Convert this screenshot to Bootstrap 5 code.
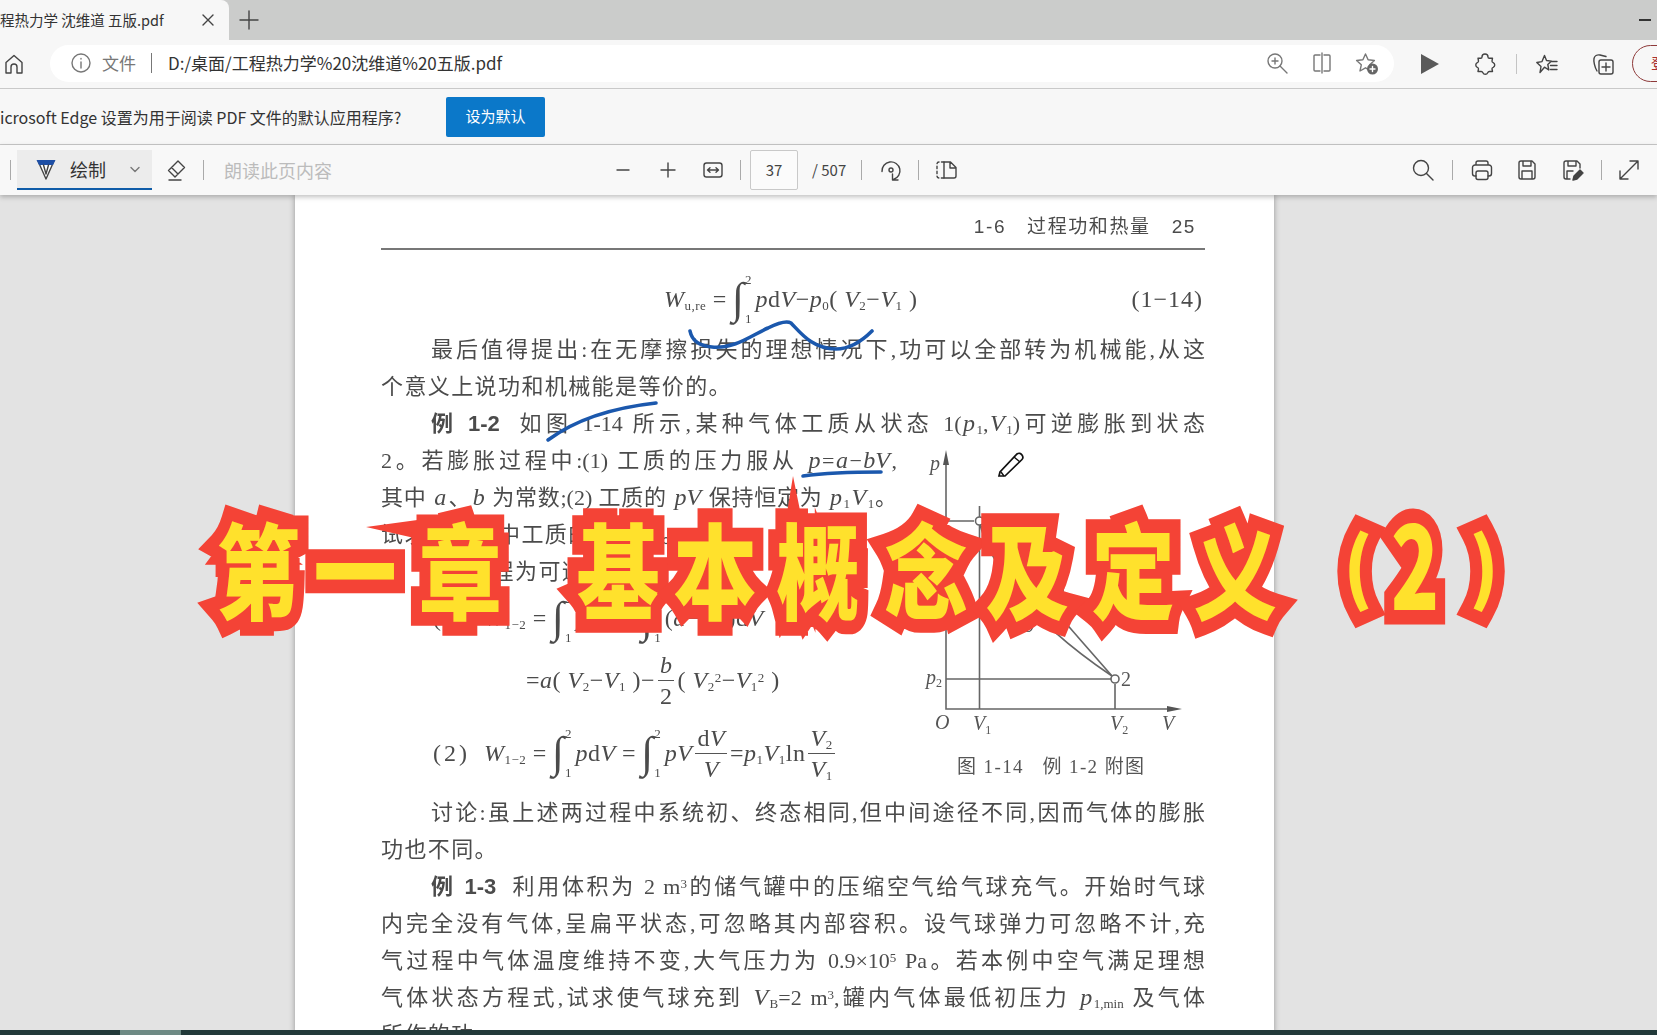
<!DOCTYPE html>
<html lang="zh-CN">

<head>
  <meta charset="utf-8">
  <title>工程热力学 沈维道 五版.pdf</title>
  <link href="https://cdn.jsdelivr.net/npm/bootstrap@5.3.2/dist/css/bootstrap.min.css" rel="stylesheet" type="text/css" />
  <script src="https://cdn.jsdelivr.net/npm/bootstrap@5.3.2/dist/js/bootstrap.bundle.min.js"></script>
  <style>
    html, body { height: 1035px; overflow: hidden; }
    body { background: #e3e3e3; font-family: "Noto Sans CJK SC", "Liberation Sans", sans-serif; color: #333; }

    /* browser chrome */
    .tab-strip { height: 40px; background: #cbcccb; }
    .tab-active { width: 229px; height: 40px; background: #f7f7f7; border-radius: 0 8px 0 0; font-size: 14.5px; }
    .tab-title { width: 196px; white-space: nowrap; }
    .tab-x { width: 24px; }
    .tab-plus { margin-left: 8px; }
    .min-btn { width: 12px; height: 1.5px; background: #333; margin-right: 6px; }

    .addr-bar { height: 49px; background: #f7f7f7; border-bottom: 1px solid #c9c9c9; overflow: hidden; }
    .home-slot { width: 50px; padding-left: 2px; flex: none; }
    .addr-pill { width: 1344px; height: 37px; background: #fff; border-radius: 19px; margin-top: -2px; font-size: 17px; flex: none; }
    .addr-info { margin-left: 19px; }
    .addr-file { color: #777; margin-left: 9px; width: 49px; }
    .addr-sep { width: 1px; height: 20px; background: #777; margin-right: 16px; }
    .addr-url { color: #333; white-space: nowrap; }
    .addr-tools { margin-left: auto; padding-right: 15px; gap: 21px; }
    .outer-tools { margin-left: 24px; flex: none; }
    .t-play { margin-right: 31px; }
    .t-ext { margin-right: 19px; }
    .t-fav { margin-left: 18px; margin-right: 32px; }
    .profile-pill { width: 60px; height: 37px; margin-left: 17px; border: 1.5px solid #8e3a3a; border-radius: 19px; color: #a33; font-size: 15px; padding-left: 18px; margin-top: -2px; flex: none; }
    .thin-sep { width: 1px; height: 20px; background: #c4c4c4; flex: none; }

    .info-bar { height: 56px; background: #f7f7f7; border-bottom: 1px solid #c9c9c9; font-size: 16px; white-space: nowrap; }
    .info-text { width: 446px; overflow: hidden; }
    .btn-default-pdf { width: 99px; height: 40px; background: #0b78c9; color: #fff; border: 0; border-radius: 2px; font-size: 15px; padding: 0; }

    .pdf-toolbar { height: 50px; background: #f8f8f8; box-shadow: 0 2px 5px rgba(0, 0, 0, .25); position: relative; z-index: 2; font-size: 16px; }
    .tb-sep { width: 1px; height: 20px; background: #aaa; flex: none; }
    .tb-first { margin-left: 10px; margin-right: 6px; }
    .draw-btn { width: 135px; height: 40px; background: #ececec; border-bottom: 2px solid #0f5ca8; flex: none; }
    .draw-pen { margin-left: 17px; }
    .draw-label { margin-left: 12px; font-size: 18px; }
    .draw-chev { margin-left: auto; margin-right: 5px; }
    .tb-eraser { margin-left: 11px; margin-right: 16px; }
    .read-text { margin-left: 20px; width: 383px; color: #bcbcbc; font-size: 18px; flex: none; }
    .tb-slot { width: 32px; height: 32px; flex: none; display: flex; align-items: center; justify-content: center; }
    .gap-13 { gap: 13px; }
    .tb-zoom-sep { margin-left: 11px; margin-right: 9px; }
    .page-input { width: 48px; height: 40px; background: #fbfbfb; border: 1px solid #c9c9c9; border-radius: 2px; font-size: 15px; color: #444; flex: none; }
    .page-total { margin-left: 14px; width: 49px; font-size: 15px; color: #444; flex: none; }
    .tb-rot { margin-left: 13px; margin-right: 11px; }
    .tb-two { margin-left: 11px; }
    .tb-right { margin-left: auto; margin-right: 12px; gap: 13px; }
    .tb-expand { margin-left: -2px; }

    /* pdf viewer */
    .viewer { position: relative; height: 840px; overflow: hidden; background: #e3e3e3; }
    .pdf-page { width: 979px; height: 840px; margin-left: 295px; background: #fff; box-shadow: 0 0 6px rgba(0, 0, 0, .35); padding: 16px 69px 0 86px; color: #4b4b4b; font-family: "Liberation Serif", "Noto Sans CJK SC", serif; font-size: 22px; filter: blur(.35px); }
    .run-head { height: 32px; font-family: "Liberation Sans", "Noto Sans CJK SC", sans-serif; font-size: 19px; letter-spacing: 1.6px; padding-right: 9px; }
    .run-head b { font-weight: 400; margin-left: 21px; }
    .head-rule { height: 2px; background: #777; margin-top: 5px; }
    .eq-main { height: 81px; padding-top: 17px; }
    .eq-num { margin-left: auto; letter-spacing: 1px; padding-right: 2px; }
    .eq-start { margin-left: 283px; }
    .tline { height: 37px; line-height: 37px; text-align: justify; text-align-last: justify; white-space: normal; }
    .tline.indent { padding-left: 50px; }
    .tline.short { text-align-last: left; letter-spacing: 1.4px; }
    .tline b { font-family: "Liberation Sans", "Noto Sans CJK SC", sans-serif; }
    .tline i { font-size: 24px; margin: 0 1.5px; }
    .eg-row { height: 352px; }
    .eg-left { width: 516px; flex: none; }
    .eg-fig { margin-left: 9px; flex: none; filter: blur(.2px); }
    i { font-family: "Liberation Serif", serif; }
    .eq-row { display: flex; align-items: center; white-space: nowrap; font-size: 24px; letter-spacing: .5px; }
    .eq-a { height: 56px; margin-left: 52px; }
    .eq-b { height: 68px; margin-left: 145px; }
    .eq-c { height: 78px; margin-left: 52px; }
    .int-sign { display: inline-flex; align-items: center; margin: 0 4px 0 5px; letter-spacing: 0; }
    .int-body { font-size: 44px; line-height: 1; font-weight: 400; }
    .int-lim { display: inline-flex; flex-direction: column; justify-content: space-between; height: 52px; font-size: 13px; line-height: 1; margin-left: 1px; }
    .frac-box { display: inline-flex; flex-direction: column; align-items: center; margin: 0 3px; line-height: 1.25; }
    .frac-top { border-bottom: 1.5px solid #555; padding: 0 2px; }
    sub, sup { font-size: 13px; }
    .sp-r { margin-right: 14px; letter-spacing: 3px; }

    .overlay-ink { position: absolute; left: 0; top: 0; pointer-events: none; }
    .ink-line { fill: none; stroke: #1b58ad; stroke-width: 3.6; stroke-linecap: round; }
    .fig-cap { font-size: 19px; letter-spacing: 1.4px; }

    .big-title { position: absolute; left: 0; top: 0; pointer-events: none; }
    .big-title text { font-family: "Noto Sans CJK SC", sans-serif; font-weight: 900; fill: #ffe12c; stroke: #f44336; stroke-width: 25px; stroke-linejoin: miter; stroke-miterlimit: 5; paint-order: stroke fill; font-size: 104px; text-anchor: middle; vector-effect: non-scaling-stroke; }
    .title-spike { fill: #f44336; }

    .bottom-bar { height: 5px; margin-top: -5px; position: relative; z-index: 3; background: #223a3a; }
    .bar-piece { width: 61px; height: 5px; margin-left: 120px; background: #6e8a84; }

    .ico { width: 24px; height: 24px; fill: none; stroke: #444; stroke-width: 1.4; stroke-linecap: round; stroke-linejoin: round; flex: none; }
    .ico.soft { stroke: #777; }
  </style>
</head>

<body>
  <div class="tab-strip d-flex align-items-center">
    <div class="tab-active d-flex align-items-center">
      <span class="tab-title">程热力学 沈维道 五版.pdf</span>
      <span class="tab-x d-flex justify-content-center">
        <svg class="ico" viewBox="0 0 24 24"><path d="M7 7l10 10M17 7L7 17" /></svg>
      </span>
    </div>
    <span class="tab-plus d-flex">
      <svg class="ico" viewBox="0 0 24 24"><path d="M12 3v18M3 12h18" /></svg>
    </span>
    <span class="min-btn ms-auto"></span>
  </div>

  <div class="addr-bar d-flex align-items-center">
    <div class="home-slot d-flex">
      <svg class="ico" viewBox="0 0 24 24"><path d="M4 21V10.500L12 3.500l8 7V21h-5v-6a3 3 0 0 0-6 0v6z" /></svg>
    </div>
    <div class="addr-pill d-flex align-items-center">
      <svg class="ico soft addr-info" viewBox="0 0 24 24"><circle cx="12" cy="12" r="9" /><path d="M12 11v6M12 7.500v.6" /></svg>
      <span class="addr-file">文件</span>
      <span class="addr-sep"></span>
      <span class="addr-url">D:/桌面/工程热力学%20沈维道%20五版.pdf</span>
      <div class="addr-tools d-flex align-items-center">
        <svg class="ico soft" viewBox="0 0 24 24"><circle cx="10" cy="10" r="7" /><path d="M10 7v6M7 10h6M15 15l7 7" /></svg>
        <svg class="ico soft" viewBox="0 0 24 24"><path d="M10 4H5a1 1 0 0 0-1 1v14a1 1 0 0 0 1 1h5M14 4h5a1 1 0 0 1 1 1v14a1 1 0 0 1-1 1h-5M12 2v20" /></svg>
        <svg class="ico soft" viewBox="0 0 24 24"><path d="M10.500 3l2.600 5.800 6.300.7-4.700 4.300 1.300 6.200-5.500-3.200L5 20l1.300-6.200-4.700-4.300 6.300-.7z" /><circle cx="17.500" cy="18" r="5.500" fill="#666" stroke="none" /><path d="M17.500 15.500v5M15 18h5" stroke="#fff" /></svg>
      </div>
    </div>
    <div class="outer-tools d-flex align-items-center">
      <svg class="ico t-play" viewBox="0 0 24 24"><path d="M3 2l18 10L3 22z" fill="#5a5a5a" stroke="none" /></svg>
      <svg class="ico t-ext" viewBox="0 0 24 24"><path d="M9 5a3 3 0 0 1 6 0c0 .8.500 1.200 1.300 1.200H19.500l-.5 3c-.1.800.4 1.200 1.200 1.500a2.500 2.500 0 0 1 0 4.600c-.8.300-1.300.700-1.200 1.500l.5 2.700h-3.200c-.8 0-1.300.5-1.600 1.200a2.600 2.600 0 0 1-4.800 0c-.3-.7-.8-1.200-1.600-1.200H5l.5-2.700c.1-.8-.4-1.200-1.200-1.500a2.500 2.500 0 0 1 0-4.600c.8-.3 1.300-.7 1.200-1.500L5 6.200h2.700C8.500 6.200 9 5.800 9 5z" /></svg>
      <span class="thin-sep"></span>
      <svg class="ico t-fav" viewBox="0 0 24 24"><path d="M9.500 3.500l2 5 5 .6-3.700 3.400 1 5.500-4.300-2.800L5 20.500l1-6-4.200-4 5.200-.9zM16 9.500h6M15.500 13.500h6.500M15.500 17.500h6.500" /></svg>
      <svg class="ico" viewBox="0 0 24 24"><path d="M6 19C3.500 15 2.500 9 3 6.500S6 2.500 9 3l6 1.500" /><rect x="8" y="8" width="14" height="14" rx="2" /><path d="M15 11v8M11 15h8" /></svg>
      <div class="profile-pill d-flex align-items-center">登</div>
    </div>
  </div>

  <div class="info-bar d-flex align-items-center">
    <div class="info-text">icrosoft Edge 设置为用于阅读 PDF 文件的默认应用程序?</div>
    <button type="button" class="btn btn-default-pdf">设为默认</button>
  </div>

  <div class="pdf-toolbar d-flex align-items-center">
    <span class="tb-sep tb-first"></span>
    <div class="draw-btn d-flex align-items-center">
      <svg class="ico draw-pen" viewBox="0 0 24 24"><path d="M4 4h16l-8 18z" fill="#fff" stroke="#444" /><path d="M2.500 3h19l-2.500 5H5z" fill="#1e4fa6" stroke="none" /><path d="M9.500 8l2.500 9 2.500-9" stroke="#444" /></svg>
      <span class="draw-label">绘制</span>
      <svg class="ico soft draw-chev" viewBox="0 0 24 24"><path d="M8 10.500l4 4 4-4" /></svg>
    </div>
    <svg class="ico tb-eraser" viewBox="0 0 24 24"><path d="M15 3l6.500 6.500-9.500 9.500-6.500-6.500zM8.500 9.500l6.500 6.500M6 22h12" /></svg>
    <span class="tb-sep"></span>
    <span class="read-text">朗读此页内容</span>

    <div class="d-flex align-items-center gap-13">
      <span class="tb-slot"><svg class="ico" viewBox="0 0 24 24"><path d="M6 12h12" /></svg></span>
      <span class="tb-slot"><svg class="ico" viewBox="0 0 24 24"><path d="M12 5v14M5 12h14" /></svg></span>
      <span class="tb-slot"><svg class="ico" viewBox="0 0 24 24"><rect x="3" y="5" width="18" height="14" rx="2.500" /><path d="M6.500 12h11M9 9.800L6.500 12 9 14.200M15 9.800l2.500 2.200-2.500 2.200" /></svg></span>
    </div>
    <span class="tb-sep tb-zoom-sep"></span>
    <div class="page-input d-flex align-items-center justify-content-center">37</div>
    <span class="page-total">/ 507</span>
    <span class="tb-sep"></span>
    <span class="tb-slot tb-rot"><svg class="ico" viewBox="0 0 24 24"><path d="M3 13.500a9 9 0 1 1 11.500 8M13.500 16v6H19" /><circle cx="12" cy="12" r="2" /></svg></span>
    <span class="tb-sep"></span>
    <span class="tb-slot tb-two"><svg class="ico" viewBox="0 0 24 24"><path d="M10 4H5a2 2 0 0 0-2 2v12a2 2 0 0 0 2 2h5" stroke-dasharray="2.500 2.500" /><path d="M10 4h6.500L22 9.500V18a2 2 0 0 1-2 2H10zM16 4v6h6" /></svg></span>

    <div class="tb-right d-flex align-items-center">
      <span class="tb-slot"><svg class="ico" viewBox="0 0 24 24"><circle cx="10" cy="10" r="7.500" /><path d="M15.500 15.500l6.500 6.500" /></svg></span>
      <span class="tb-sep"></span>
      <span class="tb-slot"><svg class="ico" viewBox="0 0 24 24"><path d="M6 7V5a2 2 0 0 1 2-2h8a2 2 0 0 1 2 2v2M6 18H5a2.500 2.500 0 0 1-2.500-2.500v-6A2.500 2.500 0 0 1 5 7h14a2.500 2.500 0 0 1 2.500 2.500v6A2.500 2.500 0 0 1 19 18h-1" /><rect x="6" y="13" width="12" height="8.500" rx="2" /></svg></span>
      <span class="tb-slot"><svg class="ico" viewBox="0 0 24 24"><path d="M6 3h11l3 3v13a2 2 0 0 1-2 2H6a2 2 0 0 1-2-2V5a2 2 0 0 1 2-2zM8 3v5h8V3M7 21v-8h10v8" /></svg></span>
      <span class="tb-slot"><svg class="ico" viewBox="0 0 24 24"><path d="M10 21H6a2 2 0 0 1-2-2V5a2 2 0 0 1 2-2h11l3 3v4M8 3v5h8V3M7 21v-8h6" /><path d="M13 22l1-4 6-6 3 3-6 6z" fill="#444" /></svg></span>
      <span class="tb-sep"></span>
      <span class="tb-slot tb-expand"><svg class="ico" viewBox="0 0 24 24"><path d="M21 3L3 21M13 3h8v8M3 13v8h8" /></svg></span>
    </div>
  </div>

  <div class="viewer">
    <div class="pdf-page">
      <div class="run-head d-flex justify-content-end align-items-center">
        <span>1-6</span><b>过程功和热量</b><b>25</b>
      </div>
      <div class="head-rule"></div>

      <div class="eq-main eq-row">
        <span class="eq-start"><i>W</i><sub>u,re</sub> =</span>
        <span class="int-sign"><span class="int-body">∫</span><span class="int-lim"><span>2</span><span>1</span></span></span>
        <span><i>p</i>d<i>V</i>−<i>p</i><sub>0</sub>( <i>V</i><sub>2</sub>−<i>V</i><sub>1</sub> )</span>
        <span class="eq-num">(1−14)</span>
      </div>

      <div class="tline indent">最后值得提出:在无摩擦损失的理想情况下,功可以全部转为机械能,从这</div>
      <div class="tline short">个意义上说功和机械能是等价的。</div>
      <div class="tline indent"><b>例 1-2</b>&nbsp;&nbsp;如图 1-14 所示,某种气体工质从状态 1(<i>p</i><sub>1</sub>,<i>V</i><sub>1</sub>)可逆膨胀到状态</div>

      <div class="eg-row d-flex">
        <div class="eg-left">
          <div class="tline">2。若膨胀过程中:(1) 工质的压力服从 <i>p</i>=<i>a</i>−<i>bV</i>,</div>
          <div class="tline">其中 <i>a</i>、<i>b</i> 为常数;(2) 工质的 <i>pV</i> 保持恒定为 <i>p</i><sub>1</sub><i>V</i><sub>1</sub>。</div>
          <div class="tline short">试求两过程中工质的膨胀功。</div>
          <div class="tline short indent"><b>解</b>&nbsp;&nbsp;过程为可逆过程</div>
          <div class="eq-row eq-a">
            <span class="sp-r">(1)</span><span><i>W</i><sub>1−2</sub> =</span>
            <span class="int-sign"><span class="int-body">∫</span><span class="int-lim"><span>2</span><span>1</span></span></span>
            <span><i>p</i>d<i>V</i> =</span>
            <span class="int-sign"><span class="int-body">∫</span><span class="int-lim"><span>2</span><span>1</span></span></span>
            <span>(<i>a</i>−<i>bV</i>)d<i>V</i></span>
          </div>
          <div class="eq-row eq-b">
            <span>=<i>a</i>( <i>V</i><sub>2</sub>−<i>V</i><sub>1</sub> )−</span>
            <span class="frac-box"><span class="frac-top"><i>b</i></span><span>2</span></span>
            <span>( <i>V</i><sub>2</sub><sup>2</sup>−<i>V</i><sub>1</sub><sup>2</sup> )</span>
          </div>
          <div class="eq-row eq-c">
            <span class="sp-r">(2)</span><span><i>W</i><sub>1−2</sub> =</span>
            <span class="int-sign"><span class="int-body">∫</span><span class="int-lim"><span>2</span><span>1</span></span></span>
            <span><i>p</i>d<i>V</i> =</span>
            <span class="int-sign"><span class="int-body">∫</span><span class="int-lim"><span>2</span><span>1</span></span></span>
            <span><i>pV</i></span>
            <span class="frac-box"><span class="frac-top">d<i>V</i></span><span><i>V</i></span></span>
            <span>=<i>p</i><sub>1</sub><i>V</i><sub>1</sub>ln</span>
            <span class="frac-box"><span class="frac-top"><i>V</i><sub>2</sub></span><span><i>V</i><sub>1</sub></span></span>
          </div>
        </div>
        <svg class="eg-fig" width="300" height="350" viewBox="906 441 300 350">
          <g fill="none" stroke="#666" stroke-width="1.6">
            <path d="M946 455V708H1172" />
            <path d="M979.500 505V708M946 520H974M946 678H1111M1115 683V708" />
            <path d="M980 524L1112 675" />
            <path d="M980 524C1000 590 1060 640 1112 675" />
            <circle cx="979.500" cy="520" r="4" fill="#fff" />
            <circle cx="1115" cy="678" r="4" fill="#fff" />
          </g>
          <path d="M946 449l-3 15h6zM1182 708l-15-3v6z" fill="#555" />
          <g fill="#555" font-family="Liberation Serif, serif" font-size="20">
            <text x="930" y="469" font-style="italic">p</text>
            <text x="926" y="683" font-style="italic">p<tspan font-size="12" dy="3" font-style="normal">2</tspan></text>
            <text x="1121" y="685">2</text>
            <text x="935" y="728" font-style="italic">O</text>
            <text x="973" y="729" font-style="italic">V<tspan font-size="12" dy="4" font-style="normal">1</tspan></text>
            <text x="1110" y="729" font-style="italic">V<tspan font-size="12" dy="4" font-style="normal">2</tspan></text>
            <text x="1162" y="729" font-style="italic">V</text>
            <text x="1024" y="631" font-style="italic">b</text>
            <text x="1055" y="597" font-style="italic">a</text>
            <text class="fig-cap" x="957" y="772" font-family="Liberation Serif, Noto Sans CJK SC, serif">图 1-14&#160;&#160;&#160;例 1-2 附图</text>
          </g>
        </svg>
      </div>

      <div class="tline indent">讨论:虽上述两过程中系统初、终态相同,但中间途径不同,因而气体的膨胀</div>
      <div class="tline short">功也不同。</div>
      <div class="tline indent"><b>例 1-3</b>&nbsp;&nbsp;利用体积为 2 m<sup>3</sup>的储气罐中的压缩空气给气球充气。开始时气球</div>
      <div class="tline">内完全没有气体,呈扁平状态,可忽略其内部容积。设气球弹力可忽略不计,充</div>
      <div class="tline">气过程中气体温度维持不变,大气压力为 0.9×10<sup>5</sup> Pa。若本例中空气满足理想</div>
      <div class="tline">气体状态方程式,试求使气球充到 <i>V</i><sub>B</sub>=2 m<sup>3</sup>,罐内气体最低初压力 <i>p</i><sub>1,min</sub> 及气体</div>
      <div class="tline short">所作的功。</div>
    </div>

    <svg class="overlay-ink" width="1657" height="840" viewBox="0 195 1657 840">
      <path class="ink-line" d="M690 331C692 341 700 346 712 347C735 349 752 335 768 328C778 323 786 320 791 323C800 332 812 349 836 349C852 349 864 339 872 331" />
      <path class="ink-line" d="M548 440C575 420 610 408 656 403" />
      <path class="ink-line" d="M803 476C825 473 855 472 881 472" />
      <g transform="translate(998 452)">
        <path d="M3 24l-2 0 1-4L19 2c2-1.500 4-.5 5 1s1.500 3 0 4.500L7 24z" fill="#fff" stroke="#111" stroke-width="1.700" />
        <path d="M16 5l6 5M3 20l3 4" fill="none" stroke="#111" stroke-width="1.400" />
      </g>
    </svg>

    <svg class="big-title" width="1657" height="840" viewBox="0 195 1657 840">
      <path class="title-spike" d="M793 476L785 525H803zM366 527L432 518V542z" />
      <text transform="translate(258 612) scale(.8 1)">第</text>
      <text transform="translate(355 612) scale(.8 1)">一</text>
      <text transform="translate(460 612) scale(.8 1)">章</text>
      <text transform="translate(618 612) scale(.8 1)">基</text>
      <text transform="translate(715 612) scale(.8 1)">本</text>
      <text transform="translate(818 612) scale(.8 1)">概</text>
      <text transform="translate(926 612) scale(.8 1)">念</text>
      <text transform="translate(1027 612) scale(.8 1)">及</text>
      <text transform="translate(1133 612) scale(.8 1)">定</text>
      <text transform="translate(1235 612) scale(.8 1)">义</text>
      <text transform="translate(1358 596) scale(.7 .75)">(</text>
      <text transform="translate(1415 610) scale(.76 1.1)">2</text>
      <text transform="translate(1484 596) scale(.7 .75)">)</text>
    </svg>
  </div>

  <div class="bottom-bar"><div class="bar-piece"></div></div>
</body>

</html>
